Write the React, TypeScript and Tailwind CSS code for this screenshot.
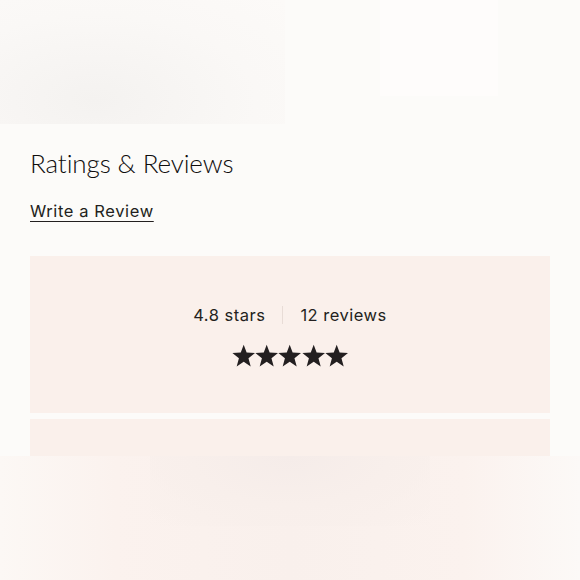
const Star = () => (
  <svg viewBox="0 0 24 24" className="w-[23.4px] h-[23.4px]" fill="#231f20">
    <path d="M12 0.8l3 8 8.6.4-6.7 5.4 2.3 8.4L12 18.2l-7.2 4.8 2.3-8.4L0.4 9.2l8.6-.4z" />
  </svg>
);

const App = () => {
  return (
    <div className="relative w-[580px] h-[580px] overflow-hidden bg-[#fcfbf9] font-['Inter',sans-serif] text-[#231f20]">
      {/* faded hero image above */}
      <div className="h-[124px] flex">
        <div className="w-[285px] h-full bg-[radial-gradient(ellipse_at_95px_100px,#f4f2f0_0%,#f7f5f3_30%,#faf8f6_60%,#fcfaf8_100%)]" />
        <div className="w-[95px]" />
        <div className="w-[118px] h-[96px] bg-[#fefcfb]" />
      </div>

      <section className="px-[30px] pt-[22px]">
        <h2 className="font-['Lato',sans-serif] text-[26px] leading-[34px] font-light tracking-[-0.1px] text-[#0f0d0d]">
          Ratings &amp; Reviews
        </h2>
        <a href="#" className="inline-block mt-[20px] text-[16.5px] leading-[22px] underline underline-offset-[4px] tracking-[0.6px]">
          Write a Review
        </a>

        <div className="mt-[33px] h-[157px] bg-[#faf0eb] flex flex-col items-center pt-[47px]">
          <div className="flex items-center text-[16.5px] leading-[24px] tracking-[0.5px]">
            <span>4.8 stars</span>
            <span className="mx-[17px] w-px h-[18px] bg-[#e8dcd6]" />
            <span>12 reviews</span>
          </div>
          <div className="flex mt-[17px]">
            <Star />
            <Star />
            <Star />
            <Star />
            <Star />
          </div>
        </div>
        <div className="mt-[6px] h-[200px] bg-[#faf0eb]" />
      </section>

      {/* blurred fade overlay at the bottom */}
      <div className="absolute left-0 right-0 top-[456px] bottom-0 bg-[linear-gradient(90deg,#fcf8f5_0%,#fbf2ee_20%,#f9f0ec_50%,#fbf2ee_80%,#fcf9f7_100%)]">
        <div className="absolute left-[150px] right-[150px] top-0 h-[70px] bg-[radial-gradient(ellipse_at_50%_0%,#f5ece9_0%,#f8efeb_50%,transparent_100%)]" />
      </div>
    </div>
  );
};

export default App;
